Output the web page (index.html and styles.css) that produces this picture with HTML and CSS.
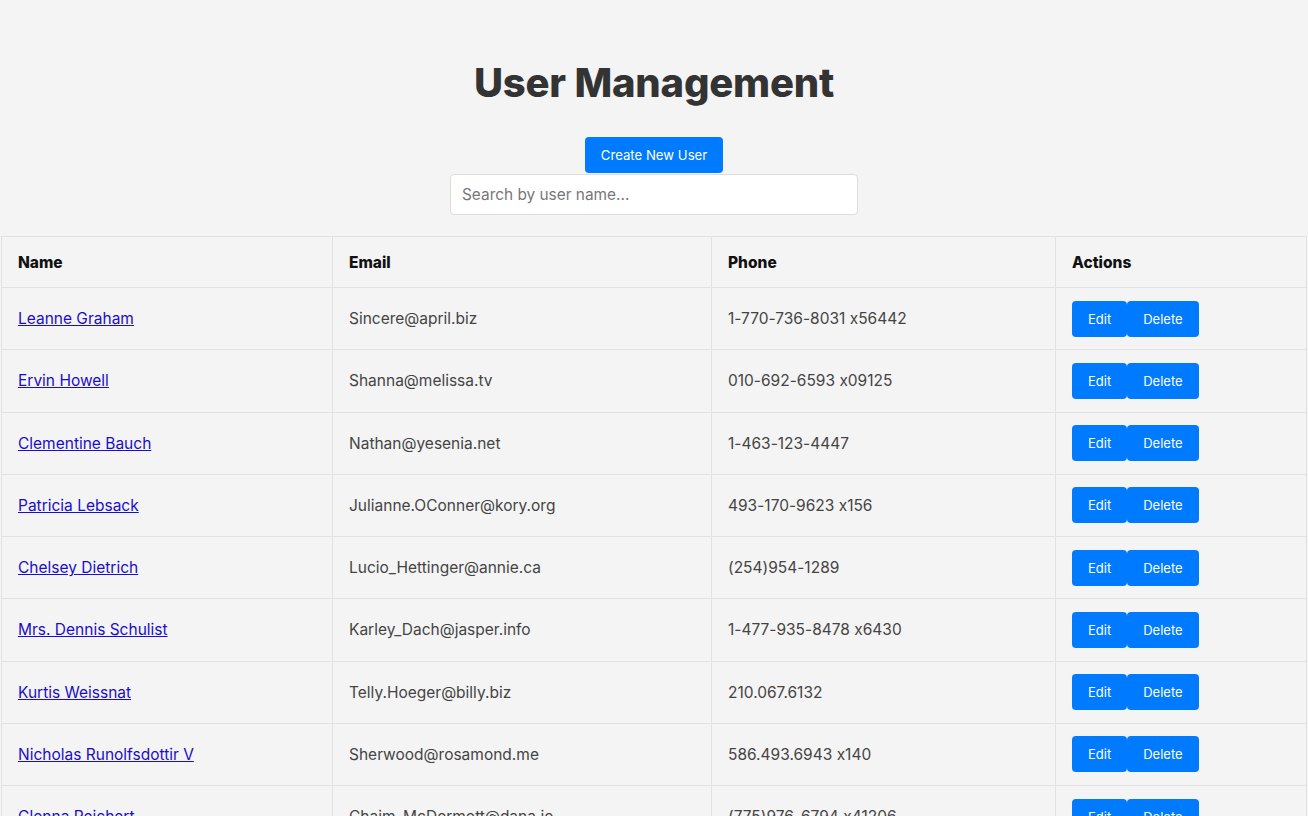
FILE: index.html
```html
<!DOCTYPE html>
<html>
<head>
<meta charset="utf-8">
<link rel="stylesheet" href="styles.css">
</head>
<body>
<div class="app">
  <h1 class="title">User Management</h1>
  <div class="controls">
    <button class="btn create">Create New User</button>
    <input class="search" type="text" placeholder="Search by user name...">
  </div>
  <table class="users">
    <colgroup>
      <col class="c-name"><col class="c-email"><col class="c-phone"><col class="c-actions">
    </colgroup>
    <thead>
      <tr><th>Name</th><th>Email</th><th>Phone</th><th>Actions</th></tr>
    </thead>
    <tbody>
      <tr><td><a href="#">Leanne Graham</a></td><td>Sincere@april.biz</td><td>1-770-736-8031 x56442</td><td><div class="acts"><button class="btn sm">Edit</button><button class="btn sm">Delete</button></div></td></tr>
      <tr><td><a href="#">Ervin Howell</a></td><td>Shanna@melissa.tv</td><td>010-692-6593 x09125</td><td><div class="acts"><button class="btn sm">Edit</button><button class="btn sm">Delete</button></div></td></tr>
      <tr><td><a href="#">Clementine Bauch</a></td><td>Nathan@yesenia.net</td><td>1-463-123-4447</td><td><div class="acts"><button class="btn sm">Edit</button><button class="btn sm">Delete</button></div></td></tr>
      <tr><td><a href="#">Patricia Lebsack</a></td><td>Julianne.OConner@kory.org</td><td>493-170-9623 x156</td><td><div class="acts"><button class="btn sm">Edit</button><button class="btn sm">Delete</button></div></td></tr>
      <tr><td><a href="#">Chelsey Dietrich</a></td><td>Lucio_Hettinger@annie.ca</td><td>(254)954-1289</td><td><div class="acts"><button class="btn sm">Edit</button><button class="btn sm">Delete</button></div></td></tr>
      <tr><td><a href="#">Mrs. Dennis Schulist</a></td><td>Karley_Dach@jasper.info</td><td>1-477-935-8478 x6430</td><td><div class="acts"><button class="btn sm">Edit</button><button class="btn sm">Delete</button></div></td></tr>
      <tr><td><a href="#">Kurtis Weissnat</a></td><td>Telly.Hoeger@billy.biz</td><td>210.067.6132</td><td><div class="acts"><button class="btn sm">Edit</button><button class="btn sm">Delete</button></div></td></tr>
      <tr><td><a href="#">Nicholas Runolfsdottir V</a></td><td>Sherwood@rosamond.me</td><td>586.493.6943 x140</td><td><div class="acts"><button class="btn sm">Edit</button><button class="btn sm">Delete</button></div></td></tr>
      <tr><td><a href="#">Glenna Reichert</a></td><td>Chaim_McDermott@dana.io</td><td>(775)976-6794 x41206</td><td><div class="acts"><button class="btn sm">Edit</button><button class="btn sm">Delete</button></div></td></tr>
      <tr><td><a href="#">Clementina DuBuque</a></td><td>Rey.Padberg@karina.biz</td><td>024-648-3804</td><td><div class="acts"><button class="btn sm">Edit</button><button class="btn sm">Delete</button></div></td></tr>
    </tbody>
  </table>
</div>
</body>
</html>
```
FILE: styles.css
```css
html, body {
  margin: 0;
  padding: 0;
  background: #f4f4f4;
}
body {
  font-family: Inter, "Noto Sans", "Liberation Sans", sans-serif;
  font-feature-settings: "calt" 0;
  color: #333;
}
.app {
  padding: 0 1px;
}
.title {
  margin: 0;
  padding-top: 59px;
  font-size: 40px;
  line-height: 48px;
  font-weight: 800;
  text-align: center;
  color: #333;
  letter-spacing: -0.2px;
}
.controls {
  display: flex;
  flex-direction: column;
  align-items: center;
  margin-top: 30px;
  margin-bottom: 21px;
}
.btn {
  font-family: Inter, "Noto Sans", "Liberation Sans", sans-serif;
  font-feature-settings: "calt" 0;
  background: #007bff;
  color: #fff;
  border: none;
  border-radius: 4px;
  cursor: pointer;
}
.create {
  width: 138px;
  height: 36px;
  font-size: 13.2px;
  padding: 0;
}
.search {
  width: 408px;
  height: 41px;
  box-sizing: border-box;
  margin-top: 1px;
  padding: 0 11px;
  border: 1px solid #dcdcdc;
  border-radius: 4px;
  background: #fff;
  font-family: Inter, "Noto Sans", "Liberation Sans", sans-serif;
  font-size: 15.4px;
  color: #333;
  outline: none;
}
.search::placeholder {
  color: #777;
}
.users {
  width: 100%;
  border-collapse: collapse;
  table-layout: fixed;
}
.c-name { width: 331px; }
.c-email { width: 379px; }
.c-phone { width: 344px; }
.c-actions { width: auto; }
.users th, .users td {
  border: 1px solid #e2e2e2;
  text-align: left;
  padding: 0 16px;
}
.users th {
  height: 51px;
  box-sizing: border-box;
  font-size: 15.5px;
  font-weight: 800;
  color: #111;
}
.users td {
  height: 62.25px;
  box-sizing: border-box;
  font-size: 15.5px;
  color: #444;
}
.users a {
  color: #1a0dcc;
  text-decoration: underline;
}
.acts {
  display: flex;
}
.sm {
  height: 36px;
  padding: 0 16px;
  font-size: 13px;
}
```
